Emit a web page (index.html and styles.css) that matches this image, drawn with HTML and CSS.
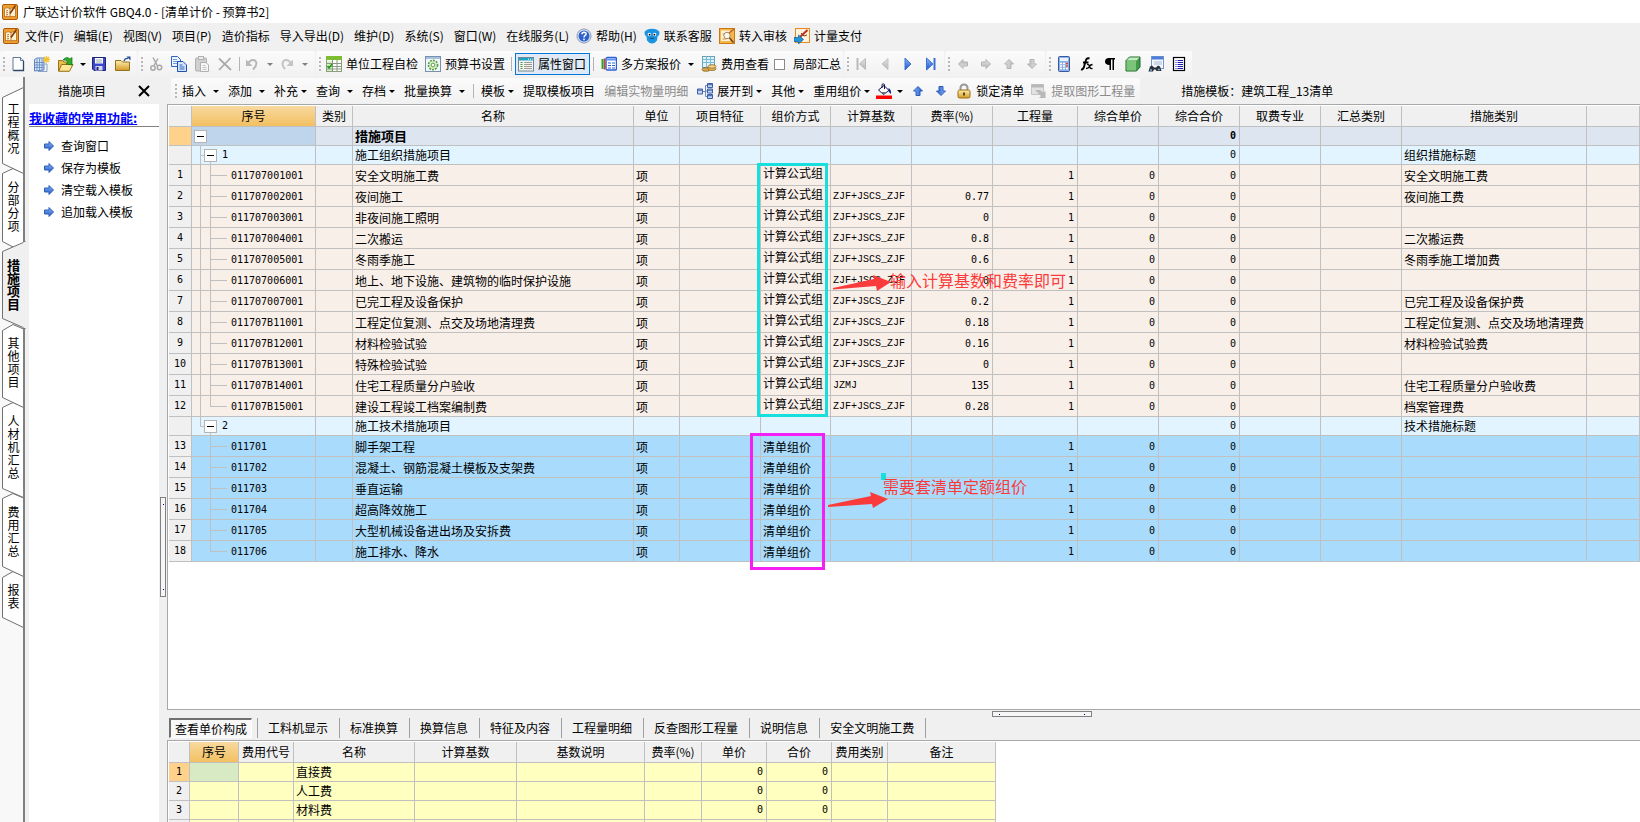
FILE: index.html
```html
<!DOCTYPE html>
<html lang="zh-CN">
<head>
<meta charset="utf-8">
<title>广联达计价软件 GBQ4.0</title>
<link rel="stylesheet" href="styles.css">
</head>
<body>
<svg class="defs" aria-hidden="true">
  <defs>
    <linearGradient id="g-blue" x1="0" y1="0" x2="0" y2="1"><stop offset="0" stop-color="#8db8f5"/><stop offset="1" stop-color="#1f56c8"/></linearGradient>
    <linearGradient id="g-gold" x1="0" y1="0" x2="0" y2="1"><stop offset="0" stop-color="#fff0b0"/><stop offset="1" stop-color="#d39a26"/></linearGradient>
    <linearGradient id="g-gray" x1="0" y1="0" x2="0" y2="1"><stop offset="0" stop-color="#e4e4e4"/><stop offset="1" stop-color="#b4b4b4"/></linearGradient>
    <symbol id="app" viewBox="0 0 16 16"><rect x=".5" y=".5" width="15" height="15" rx="1.5" fill="#f0a02e" stroke="#a85a08"/><path d="M2.500 4.500Q5 3 8 4.500Q11 3 13.500 4.500V13Q11 11.500 8 13Q5 11.500 2.500 13Z" fill="#fff6d8" stroke="#b5651d" stroke-width=".8"/><path d="M4 7l2-.6M4 9l2-.6M4 11l2-.6M8 4.500V13" stroke="#a85a08" stroke-width=".8"/><path d="M13.500 1.500L8 9.500" stroke="#8a3a0a" stroke-width="1.600"/></symbol>
    <symbol id="new" viewBox="0 0 16 16"><path d="M3 1.500H10.500L13.500 4.500V14.500H3Z" fill="#fff" stroke="#5f7796"/><path d="M10.500 1.500V4.500H13.500" fill="#cfe0f5" stroke="#5f7796"/><path d="M13.500 5v9.500H3.500" fill="none" stroke="#2e4766" stroke-width="1.300"/></symbol>
    <symbol id="newtab" viewBox="0 0 16 16"><path d="M.5 3.500L3 2H10V14L.5 15Z" fill="#d5e4f6" stroke="#5c82ba"/><path d="M3 3v11.500M5.500 2.500V14.500M8 3v11M.5 6.500H10M.5 9H10M.5 11.500H10" stroke="#5e86c2" stroke-width=".8"/><path d="M10.500 8h2.500v7.500H4" fill="none" stroke="#8aa3c6"/><path d="M12.500 0v7M9 3.500H16M10 1l5 5M15 1l-5 5" stroke="#f2c230" stroke-width="1.300"/></symbol>
    <symbol id="open" viewBox="0 0 16 16"><path d="M.5 4.500H4.500L6 6H11V15H.5Z" fill="#e8bd4c" stroke="#9a7418"/><path d="M3.500 8.500H15L11.500 15.200H.8Z" fill="#ffe79a" stroke="#9a7418"/><path d="M5 4Q8.500-.5 12 3L14 1.500V9L8 8L10.200 5.700Q8 3.500 5 4Z" fill="#2cae2c" stroke="#11700f" stroke-width=".7"/></symbol>
    <symbol id="save" viewBox="0 0 16 16"><path d="M1.500 1.500H14.500V14.500H3L1.500 13Z" fill="#3c46c8" stroke="#1d2378"/><rect x="4" y="2" width="8" height="5.500" fill="#fff"/><path d="M5 4h6M5 6h6" stroke="#9aa"/><rect x="4.500" y="10" width="7" height="4.500" fill="#d5d8ea"/><rect x="5.500" y="11" width="2" height="3" fill="#1d2378"/></symbol>
    <symbol id="folder" viewBox="0 0 16 16"><path d="M.5 4.500H6L7.500 6H14.500V14.500H.5Z" fill="url(#g-gold)" stroke="#94711d"/><path d="M9 5Q10 2 13 2.500" fill="none" stroke="#2b4d92" stroke-width="1.300"/><path d="M11.500 .5H15.500V4.500Z" fill="#2b4d92"/></symbol>
    <symbol id="cut" viewBox="0 0 16 16"><path d="M5 1.500L9.500 10M10 2.500L6 9.500" stroke="#a8a8a8" stroke-width="1.500"/><circle cx="5" cy="12" r="2.200" fill="none" stroke="#a8a8a8" stroke-width="1.500"/><circle cx="11.500" cy="11.500" r="2.200" fill="none" stroke="#a8a8a8" stroke-width="1.500"/></symbol>
    <symbol id="copy" viewBox="0 0 16 16"><path d="M.5.5H6.500L9.500 3.500V10.500H.5Z" fill="#eef5ff" stroke="#2e64c0"/><path d="M2 3.500h4M2 5.500h5M2 7.500h4" stroke="#6f9be0"/><path d="M6.500 5.500H12L15.500 9V15.500H6.500Z" fill="#d6e6fc" stroke="#1d50ac"/><path d="M8.500 9h3M8.500 11h5M8.500 13h5" stroke="#2e64c0"/></symbol>
    <symbol id="paste" viewBox="0 0 16 16"><rect x="1.500" y="2" width="11" height="13" rx="1" fill="#d0d0d0" stroke="#b0b0b0"/><rect x="4.500" y=".5" width="5" height="3" fill="#eee" stroke="#b0b0b0"/><path d="M6.500 6.500H12L14.500 9V15.500H6.500Z" fill="#f6f6f6" stroke="#b0b0b0"/><path d="M8.500 9.500h3M8.500 11.500h4M8.500 13.500h4" stroke="#c4c4c4"/></symbol>
    <symbol id="del" viewBox="0 0 16 16"><path d="M2 2.500L14 14M13.500 2L2 14" stroke="#aaa" stroke-width="1.800"/></symbol>
    <symbol id="undo" viewBox="0 0 16 16"><path d="M4 7.500Q7 2.500 11 4.500Q14.500 8 9 13.500" fill="none" stroke="#b8b8b8" stroke-width="2"/><path d="M2 3.500V10H8.500Z" fill="#b8b8b8"/></symbol>
    <symbol id="redo" viewBox="0 0 16 16"><path d="M12 7.500Q9 2.500 5 4.500Q1.500 8 6 13" fill="none" stroke="#c4c4c4" stroke-width="2"/><path d="M14 3.500V10H7.500Z" fill="#c4c4c4"/></symbol>
    <symbol id="check" viewBox="0 0 16 16"><rect x=".5" y="1.500" width="15" height="14" fill="#fff" stroke="#8aa07a"/><rect x="0" y="0" width="16" height="4" fill="#7ebd32"/><rect x="1" y="5" width="5" height="10" fill="#d9f0c4"/><path d="M0 7.500H16M0 10.500H16M0 13H16M6.500 4V16M11 4V16" stroke="#8a9a82"/><path d="M1.500 10l1.500 2L6 8" fill="none" stroke="#249a1c" stroke-width="1.600"/></symbol>
    <symbol id="gear" viewBox="0 0 16 16"><rect x=".5" y=".5" width="15" height="15" fill="#f2f7fc" stroke="#7990ac"/><rect x="1" y="1" width="14" height="2" fill="#a9c1dc"/><circle cx="8" cy="9" r="4.600" fill="#ddf0d0" stroke="#58a044" stroke-width="1.600" stroke-dasharray="2 1"/><circle cx="8" cy="9" r="1.900" fill="#fff" stroke="#58a044"/></symbol>
    <symbol id="props" viewBox="0 0 16 16"><rect x=".5" y="1.500" width="15" height="13.500" fill="#f4f4f0" stroke="#748594"/><rect x="1" y="2" width="14" height="2.500" fill="#1ea4c4"/><path d="M10 3.200h1M12 3.200h1M14 3.200h.8" stroke="#fff"/><path d="M2.500 6.500h2M2.500 8.500h2M2.500 10.500h2M2.500 12.500h2" stroke="#489a40"/><path d="M6 6.500h8M6 8.500h8M6 10.500h8M6 12.500h8" stroke="#9a9a90"/></symbol>
    <symbol id="plans" viewBox="0 0 16 16"><path d="M1.500 3v10" stroke="#22ac2a" stroke-width="2"/><path d="M3.500 2.500V13.500" stroke="#e33a20" stroke-width="1.600"/><rect x="5" y="1.500" width="10.500" height="12.500" rx="1.500" fill="#fff" stroke="#2c60d2" stroke-width="1.400"/><path d="M5 3.500H15" stroke="#5f92f0" stroke-width="2"/><path d="M7 7h3M11 7h3M7 9.500h3M11 9.500h3M7 12h3M11 12h3" stroke="#2c60d2"/></symbol>
    <symbol id="fees" viewBox="0 0 16 16"><rect x="1.500" y=".5" width="12" height="11" fill="#dff3fa" stroke="#6a9fb8"/><path d="M1.500 3.500H13.500M1.500 6.500H13.500M5.500.5V11.500M9.500.5V11.500" stroke="#78bcd0"/><ellipse cx="5" cy="13.500" rx="4" ry="1.800" fill="#dba848" stroke="#8c6422" stroke-width=".8"/><ellipse cx="11" cy="12.700" rx="4" ry="1.800" fill="#e8bd60" stroke="#8c6422" stroke-width=".8"/><ellipse cx="11" cy="10.500" rx="4" ry="1.800" fill="#f5d284" stroke="#8c6422" stroke-width=".8"/></symbol>
    <symbol id="help" viewBox="0 0 16 16"><circle cx="8" cy="8" r="7" fill="#dfe7f4" stroke="#8a9ab8"/><circle cx="8" cy="8" r="5.500" fill="#2e61cc"/><path d="M5.900 6.200Q6 4.200 8 4.200Q10.200 4.300 10.100 6Q10 7 8.900 7.700Q8 8.300 8 9.400" fill="none" stroke="#fff" stroke-width="1.500"/><rect x="7.200" y="10.600" width="1.600" height="1.600" fill="#fff"/></symbol>
    <symbol id="mascot" viewBox="0 0 16 16"><path d="M.5 4Q2 1 8 .8Q14 1 15.500 4Q15.800 7 13.500 8.500L13 12.500Q11 15.500 8 15.500Q5 15.500 3 12.500L2.500 8.500Q.2 7 .5 4Z" fill="#1a94e0"/><circle cx="5.400" cy="6.500" r="1.700" fill="#fff"/><circle cx="10.600" cy="6.500" r="1.700" fill="#fff"/><circle cx="5.600" cy="6.700" r=".9"/><circle cx="10.400" cy="6.700" r=".9"/><path d="M6 10Q8 11.300 10 10" fill="none" stroke="#0a4680"/></symbol>
    <symbol id="audit" viewBox="0 0 16 16"><rect x=".5" y=".5" width="15" height="15" fill="#f7b544" stroke="#c57a18"/><path d="M2 2.500h9v10.500H2z" fill="#fff2d8"/><path d="M3.500 6h5M3.500 11h4" stroke="#cf8a40"/><circle cx="8" cy="7.500" r="3.200" fill="#fff8e8" stroke="#a08a70"/><path d="M10.500 10l4 4.500" stroke="#7a4a20" stroke-width="1.800"/><path d="M10 5l5-4" stroke="#c05a20" stroke-width="1.300"/></symbol>
    <symbol id="pay" viewBox="0 0 16 16"><rect x="1.500" y=".5" width="14" height="14" fill="#fff1dc" stroke="#e58a22"/><path d="M6 9L13.500 2" stroke="#c2301c" stroke-width="2"/><path d="M7 5l3 3 3-1" stroke="#7a3a20" fill="none"/><path d="M0 9.500H4.500V7L9.500 11.500L4.500 16V13.500H0Z" fill="#2196d8" stroke="#0d5c96" stroke-width=".7"/></symbol>
    <symbol id="tree" viewBox="0 0 16 16"><path d="M5 8.500h3.500M8.500 2.500v11M8.500 2.500H11M8.500 8H11M8.500 13.500H11" fill="none" stroke="#6a86bc"/><path d="M.5 6h5v5h-5zM10.500 .5h5v4h-5zM10.500 6h5v4h-5zM10.500 11.500h5v4h-5z" fill="#c2d6f4" stroke="#3c5ea6"/><path d="M1 7.200h4M11 1.700h4M11 7.200h4M11 12.700h4" stroke="#3c5ea6"/></symbol>
    <symbol id="bucket" viewBox="0 0 16 16"><path d="M2.500 7L8 2.500L13 7.500L7.500 11.500Z" fill="#fff" stroke="#10104a"/><path d="M6 5V1.500Q7 0 8.500 1.500V6" fill="none" stroke="#10104a"/><path d="M12.500 5Q15.500 6.500 15 11Q13 9.500 12.500 7.500Z" fill="#10208a"/><path d="M5 9h6l-3.500 2.500z" fill="#777"/><rect x="0" y="12.500" width="16" height="3.500" fill="#f00"/></symbol>
    <symbol id="lock" viewBox="0 0 16 16"><path d="M4.500 8V4.500Q5 1.500 8 1.500Q11 1.500 11.500 4.500V8" fill="none" stroke="#9a9a96" stroke-width="2"/><rect x="2" y="7" width="12" height="8" rx="1.500" fill="url(#g-gold)" stroke="#9a6e14"/><path d="M8 9.500v3" stroke="#50380a" stroke-width="1.800"/></symbol>
    <symbol id="extract" viewBox="0 0 16 16"><path d="M.5 1.500H12.500V11.500H.5Z" fill="#e2e2e2" stroke="#c4c4c4"/><path d="M.5 3H12.500" stroke="#b8b8b8" stroke-width="3"/><path d="M4 7H9L12 9.500L14.500 8V15H8L10 13Z" fill="#b8b8b8"/></symbol>
    <symbol id="first" viewBox="0 0 16 16"><path d="M3.500 2v12" stroke="#bbb" stroke-width="2"/><path d="M11.500 2.500V13.500L5.500 8Z" fill="url(#g-gray)" stroke="#bbb"/></symbol>
    <symbol id="prev" viewBox="0 0 16 16"><path d="M11 2.500V13.500L5 8Z" fill="url(#g-gray)" stroke="#c4c4c4"/></symbol>
    <symbol id="next" viewBox="0 0 16 16"><path d="M5 2V14L11 8Z" fill="url(#g-blue)" stroke="#3a70d4"/></symbol>
    <symbol id="last" viewBox="0 0 16 16"><path d="M3.500 2V14L10 8Z" fill="url(#g-blue)" stroke="#3a70d4"/><path d="M11.500 2v12" stroke="#3a70d4" stroke-width="2"/></symbol>
    <symbol id="ar" viewBox="0 0 12 12"><path d="M1.500 4H6V1.500L10.500 6L6 10.500V8H1.500Z"/></symbol>
    <symbol id="calc" viewBox="0 0 16 16"><rect x="2.500" y=".5" width="11" height="15" rx="1" fill="#8fb0e6" stroke="#35599c"/><rect x="4" y="2" width="8" height="3" fill="#e9f2ff"/><path d="M4 7.500h8M4 10h8M4 12.500h8" stroke="#fff" stroke-width="1.600" stroke-dasharray="2 1"/><path d="M10 7.500h2M10 10h2" stroke="#d8403a" stroke-width="1.600"/></symbol>
    <symbol id="fx" viewBox="0 0 16 16"><path d="M2 13.500Q4.500 14 5.500 9L7 4Q8 1.500 10.500 2.500M4 6.500H9.500" fill="none" stroke="#000" stroke-width="1.900"/><path d="M8 8.500Q10 8 10.500 10.500T13.500 12.500M13.500 8.500Q11.500 8.500 10.500 10.500T7 12.500" fill="none" stroke="#000" stroke-width="1.300"/></symbol>
    <symbol id="para" viewBox="0 0 16 16"><path d="M13 2H7Q3 2.300 3 5.500Q3 8.700 7.500 9V14H9V3.500H10.500V14H12V3.500H13Z" fill="#000"/></symbol>
    <symbol id="cube" viewBox="0 0 16 16"><path d="M1 4.500L4.500 1H15V11L11.500 15H1Z" fill="#3f9c4a" stroke="#1f6b2c"/><path d="M1.500 4.500L4.700 1.500H14.500L11.500 4.500Z" fill="#c4ecc0"/><path d="M1.500 5H11V14.500H1.500Z" fill="#7cc47a"/></symbol>
    <symbol id="find" viewBox="0 0 16 16"><rect x="3.500" y=".5" width="12" height="12" fill="#f2f7ff" stroke="#7a96c8"/><path d="M4 2H15" stroke="#4b7fd8" stroke-width="3"/><path d="M6 6h8M6 8h8" stroke="#a8b8d2"/><path d="M2 10.500L4 9.500L6 11.500H8L10 9.500L12 10.500L13.500 15H8.500L7.500 13.500H6L5 15.500H.5Z" fill="#2a3038"/><path d="M2 14h2M9.800 13.500h2" stroke="#7ab0e8" stroke-width="1.500"/></symbol>
    <symbol id="list" viewBox="0 0 16 16"><rect x="2.500" y="1.500" width="11" height="13" fill="#fff" stroke="#000" stroke-width="1.200"/><path d="M4.500 4.500h1M4.500 6.500h1M4.500 8.500h1M4.500 10.500h1M4.500 12.500h1M6.500 4.500h5.500M6.500 6.500h5.500M6.500 8.500h5.500M6.500 10.500h5.500M6.500 12.500h5.500" stroke="#1c1cb0"/></symbol>
    <symbol id="x" viewBox="0 0 12 12"><path d="M1 1L11 11M11 1L1 11" stroke="#000" stroke-width="2"/></symbol>
  </defs>
</svg>

<header class="titlebar"><svg class="i"><use href="#app"/></svg><span>广联达计价软件 GBQ4.0 - [清单计价 - 预算书2]</span></header>

<nav class="menubar">
  <svg class="i"><use href="#app"/></svg>
  <button>文件(F)</button><button>编辑(E)</button><button>视图(V)</button><button>项目(P)</button><button>造价指标</button><button>导入导出(D)</button><button>维护(D)</button><button>系统(S)</button><button>窗口(W)</button><button>在线服务(L)</button>
  <button class="near"><svg class="i"><use href="#help"/></svg>帮助(H)</button><button class="near"><svg class="i"><use href="#mascot"/></svg>联系客服</button><button class="near"><svg class="i"><use href="#audit"/></svg>转入审核</button><button class="near"><svg class="i"><use href="#pay"/></svg>计量支付</button>
</nav>

<div class="toolbar">
  <div class="band roomy"><i class="grip"></i>
    <button class="ib" aria-label="新建"><svg class="i"><use href="#new"/></svg></button><button class="ib" aria-label="新建表"><svg class="i"><use href="#newtab"/></svg></button><button class="ib" aria-label="打开"><svg class="i"><use href="#open"/></svg></button><button class="drop slim" aria-label="打开选项"></button><button class="ib" aria-label="保存"><svg class="i"><use href="#save"/></svg></button><button class="ib" aria-label="目录"><svg class="i"><use href="#folder"/></svg></button>
  </div>
  <div class="band"><i class="grip"></i>
    <button class="ib" aria-label="剪切"><svg class="i"><use href="#cut"/></svg></button><button class="ib" aria-label="复制"><svg class="i"><use href="#copy"/></svg></button><button class="ib" aria-label="粘贴"><svg class="i"><use href="#paste"/></svg></button><button class="ib" aria-label="删除"><svg class="i"><use href="#del"/></svg></button><i class="sep"></i><button class="ib tight" aria-label="撤销"><svg class="i"><use href="#undo"/></svg></button><button class="drop off" aria-label="撤销列表"></button><button class="ib tight" aria-label="重做"><svg class="i"><use href="#redo"/></svg></button><button class="drop off" aria-label="重做列表"></button>
  </div>
  <div class="band"><i class="grip"></i>
    <button class="tb"><svg class="i"><use href="#check"/></svg>单位工程自检</button><button class="tb"><svg class="i"><use href="#gear"/></svg>预算书设置</button><i class="sep"></i><button class="tb pressed" aria-pressed="true"><svg class="i"><use href="#props"/></svg>属性窗口</button><i class="sep"></i><button class="tb"><svg class="i"><use href="#plans"/></svg>多方案报价</button><button class="drop mid" aria-label="报价选项"></button><button class="tb"><svg class="i"><use href="#fees"/></svg>费用查看</button><label class="tick"><input type="checkbox">局部汇总</label>
  </div>
  <div class="band"><i class="grip"></i>
    <button class="ib" aria-label="首条"><svg class="i"><use href="#first"/></svg></button><button class="ib" aria-label="上一条"><svg class="i"><use href="#prev"/></svg></button><button class="ib" aria-label="下一条"><svg class="i"><use href="#next"/></svg></button><button class="ib" aria-label="末条"><svg class="i"><use href="#last"/></svg></button>
  </div>
  <div class="band"><i class="grip"></i>
    <button class="ib" aria-label="升级"><svg class="i arr gray left"><use href="#ar"/></svg></button><button class="ib" aria-label="降级"><svg class="i arr gray"><use href="#ar"/></svg></button><button class="ib" aria-label="上移"><svg class="i arr gray up"><use href="#ar"/></svg></button><button class="ib" aria-label="下移"><svg class="i arr gray down"><use href="#ar"/></svg></button>
  </div>
  <div class="band"><i class="grip"></i>
    <button class="ib" aria-label="计算器"><svg class="i"><use href="#calc"/></svg></button><button class="ib" aria-label="函数"><svg class="i"><use href="#fx"/></svg></button><button class="ib" aria-label="段落"><svg class="i"><use href="#para"/></svg></button><button class="ib" aria-label="图元"><svg class="i"><use href="#cube"/></svg></button><button class="ib" aria-label="查找"><svg class="i"><use href="#find"/></svg></button><button class="ib" aria-label="列表"><svg class="i"><use href="#list"/></svg></button>
  </div>
</div>

<div class="work">
  <nav class="rail">
    <svg class="rail-art" width="28" height="560" aria-hidden="true">
      <g fill="#fff" stroke="#707070">
        <path d="M23.500 540.500V499L13 494.500L2.500 500.500V540.500L23.500 550.500"/>
        <path d="M23.500 499.500L2.500 489.500V421.500L13 416.500L23.500 421"/>
        <path d="M23.500 420.500L2.500 411.500V330.500L13 325.500L23.500 330"/>
        <path d="M23.500 330.500L2.500 320.500V253.500L13 247.500L23.500 252"/>
        <path d="M23.500 175.500L2.500 164.500V96.500L13 91.500L23.500 96"/>
        <path d="M23.500 96.500L2.500 86.500V20.500L23.500 10.500"/>
      </g>
      <path d="M24 0V165M24 251V560" stroke="#808080" stroke-width="2"/>
      <path d="M25.500 164.500L2.500 174.500V241.500L25.500 251.500" fill="#f0f0f0" stroke="#707070"/>
      <path d="M25 165V251" stroke="#f0f0f0" stroke-width="3"/>
    </svg>
    <button>工程概况</button><button>分部分项</button><button class="on">措施项目</button><button>其他项目</button><button>人材机汇总</button><button>费用汇总</button><button>报表</button>
  </nav>

  <aside class="side">
    <div class="side-head"><h2>措施项目</h2><button aria-label="关闭"><svg class="x"><use href="#x"/></svg></button></div>
    <div class="side-body">
      <a class="fav" href="#">我收藏的常用功能:</a>
      <ul>
        <li><a href="#"><svg class="i arr"><use href="#ar"/></svg>查询窗口</a></li>
        <li><a href="#"><svg class="i arr"><use href="#ar"/></svg>保存为模板</a></li>
        <li><a href="#"><svg class="i arr"><use href="#ar"/></svg>清空载入模板</a></li>
        <li><a href="#"><svg class="i arr"><use href="#ar"/></svg>追加载入模板</a></li>
      </ul>
    </div>
  </aside>
  <div class="vsplit"><i></i></div>

  <main class="main">
    <div class="toolbar second">
      <div class="band"><i class="grip"></i>
        <button class="menu wide">插入</button><button class="menu wide">添加</button><button class="menu">补充</button><button class="menu wide">查询</button><button class="menu">存档</button><button class="menu wide">批量换算</button><i class="sep"></i><button class="menu">模板</button><button class="tx">提取模板项目</button><button class="tx" disabled>编辑实物量明细</button><button class="menu"><svg class="i"><use href="#tree"/></svg>展开到</button><button class="menu">其他</button><button class="menu">重用组价</button><button class="ib tight" aria-label="填充颜色"><svg class="i"><use href="#bucket"/></svg></button><button class="drop mid" aria-label="选择颜色"></button><button class="ib" aria-label="上移行"><svg class="i arr up"><use href="#ar"/></svg></button><button class="ib" aria-label="下移行"><svg class="i arr down"><use href="#ar"/></svg></button><button class="tb"><svg class="i"><use href="#lock"/></svg>锁定清单</button><button class="tb" disabled><svg class="i"><use href="#extract"/></svg>提取图形工程量</button>
      </div>
      <span class="tpl">措施模板：建筑工程_13清单</span>
    </div>

    <section class="grid">
      <table class="t main-t">
        <colgroup><col class="w23"><col class="w124"><col class="w37"><col class="w281"><col class="w46"><col class="w81"><col class="w70"><col class="w81"><col class="w81"><col class="w85"><col class="w81"><col class="w81"><col class="w81"><col class="w81"><col class="w185"><col></colgroup>
        <thead><tr><th></th><th class="cur">序号</th><th>类别</th><th>名称</th><th>单位</th><th>项目特征</th><th>组价方式</th><th>计算基数</th><th>费率(%)</th><th>工程量</th><th>综合单价</th><th>综合合价</th><th>取费专业</th><th>汇总类别</th><th>措施类别</th><th></th></tr></thead>
        <tbody>
        <tr class="root"><th></th><td class="node"><button aria-label="折叠"></button></td><td></td><td>措施项目</td><td></td><td></td><td></td><td></td><td></td><td></td><td></td><td class="n">0</td><td></td><td></td><td></td><td></td></tr>
        <tr class="group"><th></th><td class="node"><button aria-label="折叠"></button>1</td><td></td><td>施工组织措施项目</td><td></td><td></td><td></td><td></td><td></td><td></td><td></td><td class="n">0</td><td></td><td></td><td>组织措施标题</td><td></td></tr>
        <tr><th>1</th><td class="leaf">011707001001</td><td></td><td>安全文明施工费</td><td>项</td><td></td><td class="up2">计算公式组</td><td class="f"></td><td class="n"></td><td class="n">1</td><td class="n">0</td><td class="n">0</td><td></td><td></td><td>安全文明施工费</td><td></td></tr>
        <tr><th>2</th><td class="leaf">011707002001</td><td></td><td>夜间施工</td><td>项</td><td></td><td class="up2">计算公式组</td><td class="f">ZJF+JSCS_ZJF</td><td class="n">0.77</td><td class="n">1</td><td class="n">0</td><td class="n">0</td><td></td><td></td><td>夜间施工费</td><td></td></tr>
        <tr><th>3</th><td class="leaf">011707003001</td><td></td><td>非夜间施工照明</td><td>项</td><td></td><td class="up2">计算公式组</td><td class="f">ZJF+JSCS_ZJF</td><td class="n">0</td><td class="n">1</td><td class="n">0</td><td class="n">0</td><td></td><td></td><td></td><td></td></tr>
        <tr><th>4</th><td class="leaf">011707004001</td><td></td><td>二次搬运</td><td>项</td><td></td><td class="up2">计算公式组</td><td class="f">ZJF+JSCS_ZJF</td><td class="n">0.8</td><td class="n">1</td><td class="n">0</td><td class="n">0</td><td></td><td></td><td>二次搬运费</td><td></td></tr>
        <tr><th>5</th><td class="leaf">011707005001</td><td></td><td>冬雨季施工</td><td>项</td><td></td><td class="up2">计算公式组</td><td class="f">ZJF+JSCS_ZJF</td><td class="n">0.6</td><td class="n">1</td><td class="n">0</td><td class="n">0</td><td></td><td></td><td>冬雨季施工增加费</td><td></td></tr>
        <tr><th>6</th><td class="leaf">011707006001</td><td></td><td>地上、地下设施、建筑物的临时保护设施</td><td>项</td><td></td><td class="up2">计算公式组</td><td class="f">ZJF+JSCS_ZJF</td><td class="n">0</td><td class="n">1</td><td class="n">0</td><td class="n">0</td><td></td><td></td><td></td><td></td></tr>
        <tr><th>7</th><td class="leaf">011707007001</td><td></td><td>已完工程及设备保护</td><td>项</td><td></td><td class="up2">计算公式组</td><td class="f">ZJF+JSCS_ZJF</td><td class="n">0.2</td><td class="n">1</td><td class="n">0</td><td class="n">0</td><td></td><td></td><td>已完工程及设备保护费</td><td></td></tr>
        <tr><th>8</th><td class="leaf">011707B11001</td><td></td><td>工程定位复测、点交及场地清理费</td><td>项</td><td></td><td class="up2">计算公式组</td><td class="f">ZJF+JSCS_ZJF</td><td class="n">0.18</td><td class="n">1</td><td class="n">0</td><td class="n">0</td><td></td><td></td><td>工程定位复测、点交及场地清理费</td><td></td></tr>
        <tr><th>9</th><td class="leaf">011707B12001</td><td></td><td>材料检验试验</td><td>项</td><td></td><td class="up2">计算公式组</td><td class="f">ZJF+JSCS_ZJF</td><td class="n">0.16</td><td class="n">1</td><td class="n">0</td><td class="n">0</td><td></td><td></td><td>材料检验试验费</td><td></td></tr>
        <tr><th>10</th><td class="leaf">011707B13001</td><td></td><td>特殊检验试验</td><td>项</td><td></td><td class="up2">计算公式组</td><td class="f">ZJF+JSCS_ZJF</td><td class="n">0</td><td class="n">1</td><td class="n">0</td><td class="n">0</td><td></td><td></td><td></td><td></td></tr>
        <tr><th>11</th><td class="leaf">011707B14001</td><td></td><td>住宅工程质量分户验收</td><td>项</td><td></td><td class="up2">计算公式组</td><td class="f">JZMJ</td><td class="n">135</td><td class="n">1</td><td class="n">0</td><td class="n">0</td><td></td><td></td><td>住宅工程质量分户验收费</td><td></td></tr>
        <tr><th>12</th><td class="leaf end">011707B15001</td><td></td><td>建设工程竣工档案编制费</td><td>项</td><td></td><td class="up2">计算公式组</td><td class="f">ZJF+JSCS_ZJF</td><td class="n">0.28</td><td class="n">1</td><td class="n">0</td><td class="n">0</td><td></td><td></td><td>档案管理费</td><td></td></tr>
        <tr class="group closing"><th></th><td class="node"><button aria-label="折叠"></button>2</td><td></td><td>施工技术措施项目</td><td></td><td></td><td></td><td></td><td></td><td></td><td></td><td class="n">0</td><td></td><td></td><td>技术措施标题</td><td></td></tr>
        <tr class="blue"><th>13</th><td class="leaf">011701</td><td></td><td>脚手架工程</td><td>项</td><td></td><td>清单组价</td><td></td><td></td><td class="n">1</td><td class="n">0</td><td class="n">0</td><td></td><td></td><td></td><td></td></tr>
        <tr class="blue"><th>14</th><td class="leaf">011702</td><td></td><td>混凝土、钢筋混凝土模板及支架费</td><td>项</td><td></td><td>清单组价</td><td></td><td></td><td class="n">1</td><td class="n">0</td><td class="n">0</td><td></td><td></td><td></td><td></td></tr>
        <tr class="blue"><th>15</th><td class="leaf">011703</td><td></td><td>垂直运输</td><td>项</td><td></td><td>清单组价</td><td></td><td></td><td class="n">1</td><td class="n">0</td><td class="n">0</td><td></td><td></td><td></td><td></td></tr>
        <tr class="blue"><th>16</th><td class="leaf">011704</td><td></td><td>超高降效施工</td><td>项</td><td></td><td>清单组价</td><td></td><td></td><td class="n">1</td><td class="n">0</td><td class="n">0</td><td></td><td></td><td></td><td></td></tr>
        <tr class="blue"><th>17</th><td class="leaf">011705</td><td></td><td>大型机械设备进出场及安拆费</td><td>项</td><td></td><td>清单组价</td><td></td><td></td><td class="n">1</td><td class="n">0</td><td class="n">0</td><td></td><td></td><td></td><td></td></tr>
        <tr class="blue"><th>18</th><td class="leaf end">011706</td><td></td><td>施工排水、降水</td><td>项</td><td></td><td>清单组价</td><td></td><td></td><td class="n">1</td><td class="n">0</td><td class="n">0</td><td></td><td></td><td></td><td></td></tr>
        </tbody>
      </table>
      <div class="mark cyan"></div>
      <div class="mark pink"></div>
      <svg class="arrows" width="740" height="420" aria-hidden="true">
        <g fill="#fb3b3b"><path d="M665 183L706 174L705 170L723 177L709 186L708 181L665 184.500Z"/><path d="M660 400L703 391L702 387L720 394L705 403L704 399L660 402Z"/></g>
        <rect x="713" y="368" width="5" height="7" fill="#18dede"/>
      </svg>
      <p class="note one">输入计算基数和费率即可</p>
      <p class="note two">需要套清单定额组价</p>
    </section>

    <section class="lower">
      <div class="hsplit"><i></i></div>
      <div class="tabs"><button class="on">查看单价构成</button><button>工料机显示</button><button>标准换算</button><button>换算信息</button><button>特征及内容</button><button>工程量明细</button><button>反查图形工程量</button><button>说明信息</button><button>安全文明施工费</button></div>
      <div class="detail">
        <table class="t sub-t">
          <colgroup><col class="w21"><col class="w49"><col class="w55"><col class="w121"><col class="w102"><col class="w128"><col class="w57"><col class="w65"><col class="w65"><col class="w56"><col class="w108"></colgroup>
          <thead><tr><th></th><th class="cur">序号</th><th>费用代号</th><th>名称</th><th>计算基数</th><th>基数说明</th><th>费率(%)</th><th>单价</th><th>合价</th><th>费用类别</th><th>备注</th></tr></thead>
          <tbody>
          <tr><th class="here">1</th><td class="pick"></td><td></td><td>直接费</td><td></td><td></td><td></td><td class="n">0</td><td class="n">0</td><td></td><td></td></tr>
          <tr><th>2</th><td></td><td></td><td>人工费</td><td></td><td></td><td></td><td class="n">0</td><td class="n">0</td><td></td><td></td></tr>
          <tr><th>3</th><td></td><td></td><td>材料费</td><td></td><td></td><td></td><td class="n">0</td><td class="n">0</td><td></td><td></td></tr>
          <tr><th></th><td></td><td></td><td></td><td></td><td></td><td></td><td></td><td></td><td></td><td></td></tr>
          </tbody>
        </table>
      </div>
    </section>
  </main>
</div>
</body>
</html>
```
FILE: styles.css
```css
* { box-sizing: border-box; }
html, body { height: 100%; }
body {
  margin: 0;
  display: flex;
  flex-direction: column;
  overflow: hidden;
  background: #f0f0f0;
  color: #000;
  font: 12px/18px "Noto Sans CJK SC", sans-serif;
}
button {
  margin: 0;
  padding: 0;
  border: 0;
  background: none;
  color: inherit;
  font: inherit;
  white-space: nowrap;
}
button:disabled { color: #8a8a8a; }
a { color: inherit; text-decoration: none; }
.defs { position: absolute; width: 0; height: 0; }
.i { width: 16px; height: 16px; flex: none; display: block; }
.arr { width: 12px; height: 12px; margin: 0 2px; fill: url(#g-blue); stroke: #2a5cb8; }
.arr.gray { fill: url(#g-gray); stroke: #b4b4b4; }
.arr.left { transform: rotate(180deg); }
.arr.up { transform: rotate(-90deg); }
.arr.down { transform: rotate(90deg); }

/* title and menu */
.titlebar {
  flex: none;
  display: flex;
  align-items: center;
  gap: 5px;
  height: 23px;
  padding-left: 2px;
  background: #fff;
}
.menubar {
  flex: none;
  display: flex;
  align-items: center;
  gap: 10px;
  height: 26px;
  margin-bottom: 2px;
  padding-left: 3px;
}
.menubar > .i { margin-right: -4px; }
.menubar button { display: flex; align-items: center; gap: 4px; }
.menubar .near { margin-left: -3px; }

/* toolbars */
.toolbar { flex: none; display: flex; gap: 1px; height: 26px; }
.band {
  display: flex;
  align-items: center;
  padding-right: 2px;
  border-radius: 2px;
  background: linear-gradient(#fbfbfb, #f1f1f1);
}
.grip {
  align-self: center;
  width: 2px;
  height: 14px;
  margin: 0 1px 0 3px;
  background: repeating-linear-gradient(#b8b8b8 0 2px, transparent 2px 4px);
}
.sep { width: 1px; height: 14px; margin: 0 3px; background: #b4b4b4; }
.ib { width: 23px; height: 22px; display: grid; place-items: center; }
.roomy .ib { width: 24px; }
.ib.tight { width: 18px; }
.drop { width: 17px; height: 22px; display: grid; place-items: center; }
.drop.slim { width: 9px; }
.drop.mid { width: 13px; }
.drop::before, .menu::after {
  content: "";
  border: 3px solid transparent;
  border-top-color: #000;
  border-bottom-width: 0;
}
.drop.off::before { border-top-color: #808080; }
.tb { display: flex; align-items: center; gap: 4px; height: 22px; padding: 0 3px 0 4px; }
.tb.pressed { padding: 0 3px 0 2px; border: 1px solid #0078d7; background: #dfeaf6; }
.tick { display: flex; align-items: center; gap: 8px; padding-left: 2px; }
.tick input {
  appearance: none;
  width: 11px;
  height: 11px;
  margin: 0;
  border: 1px solid #8a8a8a;
  background: #fff;
}
.second { height: 27px; padding: 1px 0 0 4px; gap: 41px; align-items: stretch; }
.second .band { padding-left: 1px; }
.menu { display: flex; align-items: center; height: 22px; padding: 0 5px 0 4px; }
.menu::after { margin: 0 0 0 3px; }
.menu.wide::after { margin-left: 7px; }
.menu .i { margin-right: 4px; }
.tx { padding: 0 5px 0 4px; }
.tpl { align-self: center; }

/* work area */
.work { flex: 1; display: flex; min-height: 0; }
.rail {
  position: relative;
  flex: none;
  width: 29px;
  padding-top: 12px;
  background: linear-gradient(90deg, #f8f8f8 23px, #808080 23px 25px, #f0f0f0 25px);
}
.rail-art { position: absolute; left: 0; top: 0; }
.rail button {
  position: relative;
  display: block;
  width: 13px;
  margin-left: 7px;
  padding: 13px 0;
  line-height: 13px;
  white-space: normal;
  word-break: break-all;
}
.rail .on { font-size: 13px; font-weight: 700; }
.side { flex: none; width: 130px; display: flex; flex-direction: column; }
.side-head {
  display: flex;
  align-items: center;
  justify-content: space-between;
  height: 27px;
  padding: 0 9px 0 29px;
}
.side-head h2 { margin: 0; font-size: 12px; font-weight: 400; }
.x { width: 12px; height: 12px; display: block; }
.side-body { flex: 1; background: #fff; }
.fav {
  display: block;
  padding-top: 6px;
  border-bottom: 1px solid #808080;
  color: #00f;
  font-size: 13px;
  line-height: 16px;
  font-weight: 700;
  text-decoration: underline;
}
.side ul { margin: 0; padding: 8px 0 0 12px; list-style: none; }
.side li a { display: flex; align-items: center; gap: 4px; line-height: 22px; }
.vsplit { flex: none; width: 8px; padding: 420px 1px 0; }
.vsplit i {
  display: block;
  width: 6px;
  height: 100px;
  border: 1px solid #808080;
  background:
    linear-gradient(#007, #007) 2px 6px / 1px 1px no-repeat,
    linear-gradient(#007, #007) 2px 91px / 1px 1px no-repeat,
    #f6f6f6;
}
.main { flex: 1; min-width: 0; display: flex; flex-direction: column; }
.grid {
  position: relative;
  flex: 1;
  min-height: 0;
  overflow: hidden;
  padding: 1px 0 0 1px;
  border: solid #a8a8a8;
  border-width: 1px 0 1px 1px;
  background: #fff;
}

/* tables */
.t { table-layout: fixed; border-spacing: 0; }
.main-t { width: 100%; }
.sub-t { width: 827px; }
.t th, .t td {
  height: 21px;
  padding: 0 2px;
  border: solid #c0c0c0;
  border-width: 0 1px 1px 0;
  line-height: 20px;
  white-space: nowrap;
  overflow: hidden;
}
.t th { background: #f0f0f0; font-weight: 400; text-align: center; padding: 0; }
.t td { background: #f9efe9; text-align: left; padding-top: 2px; line-height: 18px; }
.t th.cur { background: linear-gradient(#f8d9a0, #f2c061); }
.t .n, .t .f, .t .leaf, .t .node, .t tbody th {
  font-family: "DejaVu Sans Mono", monospace;
  font-size: 10px;
}
.t .n { text-align: right; padding-right: 3px; }
.t .f { font-family: "Liberation Mono", monospace; }
.t .up2 { padding: 0 2px 4px; line-height: 16px; }
.root th, .root td, .group th, .group td, .sub-t tbody th, .sub-t tbody td { height: 19px; line-height: 18px; }
.t .root td, .t .group td, .sub-t tbody td { padding-top: 0; }
.t .root th { background: #ffd28c; }
.t .root td { background: #dde6f0; font-size: 13px; font-weight: 700; }
.t .root .n { font-size: 10px; }
.t .root .node { background: #bed5ec; }
.t .group td { background-color: #e1f4ff; }
.t .blue td { background-color: #a8dbfc; }
.t .leaf {
  padding-left: 39px;
  background-image:
    linear-gradient(#c0c0c0, #c0c0c0), linear-gradient(#c0c0c0, #c0c0c0), linear-gradient(#c0c0c0, #c0c0c0);
  background-repeat: no-repeat;
  background-position: 8px 0, 18px 0, 18px 10px;
  background-size: 1px 100%, 1px 100%, 17px 1px;
}
.t .leaf.end { background-size: 1px 100%, 1px 10px, 17px 1px; }
.t .blue .leaf { background-size: 0 0, 1px 100%, 17px 1px; }
.t .blue .leaf.end { background-size: 0 0, 1px 10px, 17px 1px; }
.t .group .node {
  padding-left: 12px;
  background-image:
    linear-gradient(#c0c0c0, #c0c0c0), linear-gradient(#c0c0c0, #c0c0c0), linear-gradient(#c0c0c0, #c0c0c0);
  background-repeat: no-repeat;
  background-position: 8px 0, 8px 9px, 18px 14px;
  background-size: 1px 100%, 5px 1px, 1px 5px;
}
.t .closing .node { background-size: 1px 10px, 5px 1px, 1px 5px; }
.node button {
  width: 13px;
  height: 13px;
  margin-right: 5px;
  border: 1px solid #b4b4b4;
  vertical-align: middle;
  background: linear-gradient(#000, #000) center / 7px 1px no-repeat, #fff;
}
.sub-t tbody td { background: #ffffc0; }
.t .here { background: #ffd28c; }
.t .pick { background: #d8eac4; }
.w21 { width: 21px; } .w23 { width: 23px; } .w37 { width: 37px; } .w46 { width: 46px; }
.w49 { width: 49px; } .w55 { width: 55px; } .w56 { width: 56px; } .w57 { width: 57px; }
.w65 { width: 65px; } .w70 { width: 70px; } .w81 { width: 81px; } .w85 { width: 85px; }
.w102 { width: 102px; } .w108 { width: 108px; } .w121 { width: 121px; } .w124 { width: 124px; }
.w128 { width: 128px; } .w185 { width: 185px; } .w281 { width: 281px; }

/* annotations over the grid */
.mark { position: absolute; border: 3px solid; }
.cyan { left: 589px; top: 58px; width: 71px; height: 254px; color: #18dede; }
.pink { left: 582px; top: 328px; width: 75px; height: 137px; color: #f51ef5; }
.arrows { position: absolute; left: 0; top: 0; }
.note { position: absolute; margin: 0; color: #fb3b3b; font-size: 16px; line-height: 20px; white-space: nowrap; }
.one { left: 722px; top: 165px; }
.two { left: 715px; top: 371px; }

/* lower pane */
.lower { flex: 0 0 112px; display: flex; flex-direction: column; overflow: hidden; }
.hsplit { flex: none; height: 8px; padding-top: 1px; }
.hsplit i {
  display: block;
  width: 100px;
  height: 6px;
  margin-left: 56%;
  border: 1px solid #808080;
  background:
    linear-gradient(#007, #007) 6px 2px / 1px 1px no-repeat,
    linear-gradient(#007, #007) 91px 2px / 1px 1px no-repeat,
    #f6f6f6;
}
.tabs { flex: none; display: flex; height: 22px; padding: 0 0 2px 2px; }
.tabs button { padding: 0 11px 0 10px; border-right: 1px solid #a0a0a0; }
.tabs .on {
  margin-right: 5px;
  padding: 0 4px;
  border: 1px solid #fff;
  border-top: 2px solid #707070;
  border-left: 2px solid #707070;
  background: #f8f8f8;
  line-height: 16px;
}
.tabs .on + button { border-left: 1px solid #a0a0a0; }
.detail { flex: 1; padding: 1px 0 0 1px; border: solid #a8a8a8; border-width: 1px 0 0 1px; background: #fff; }
```
